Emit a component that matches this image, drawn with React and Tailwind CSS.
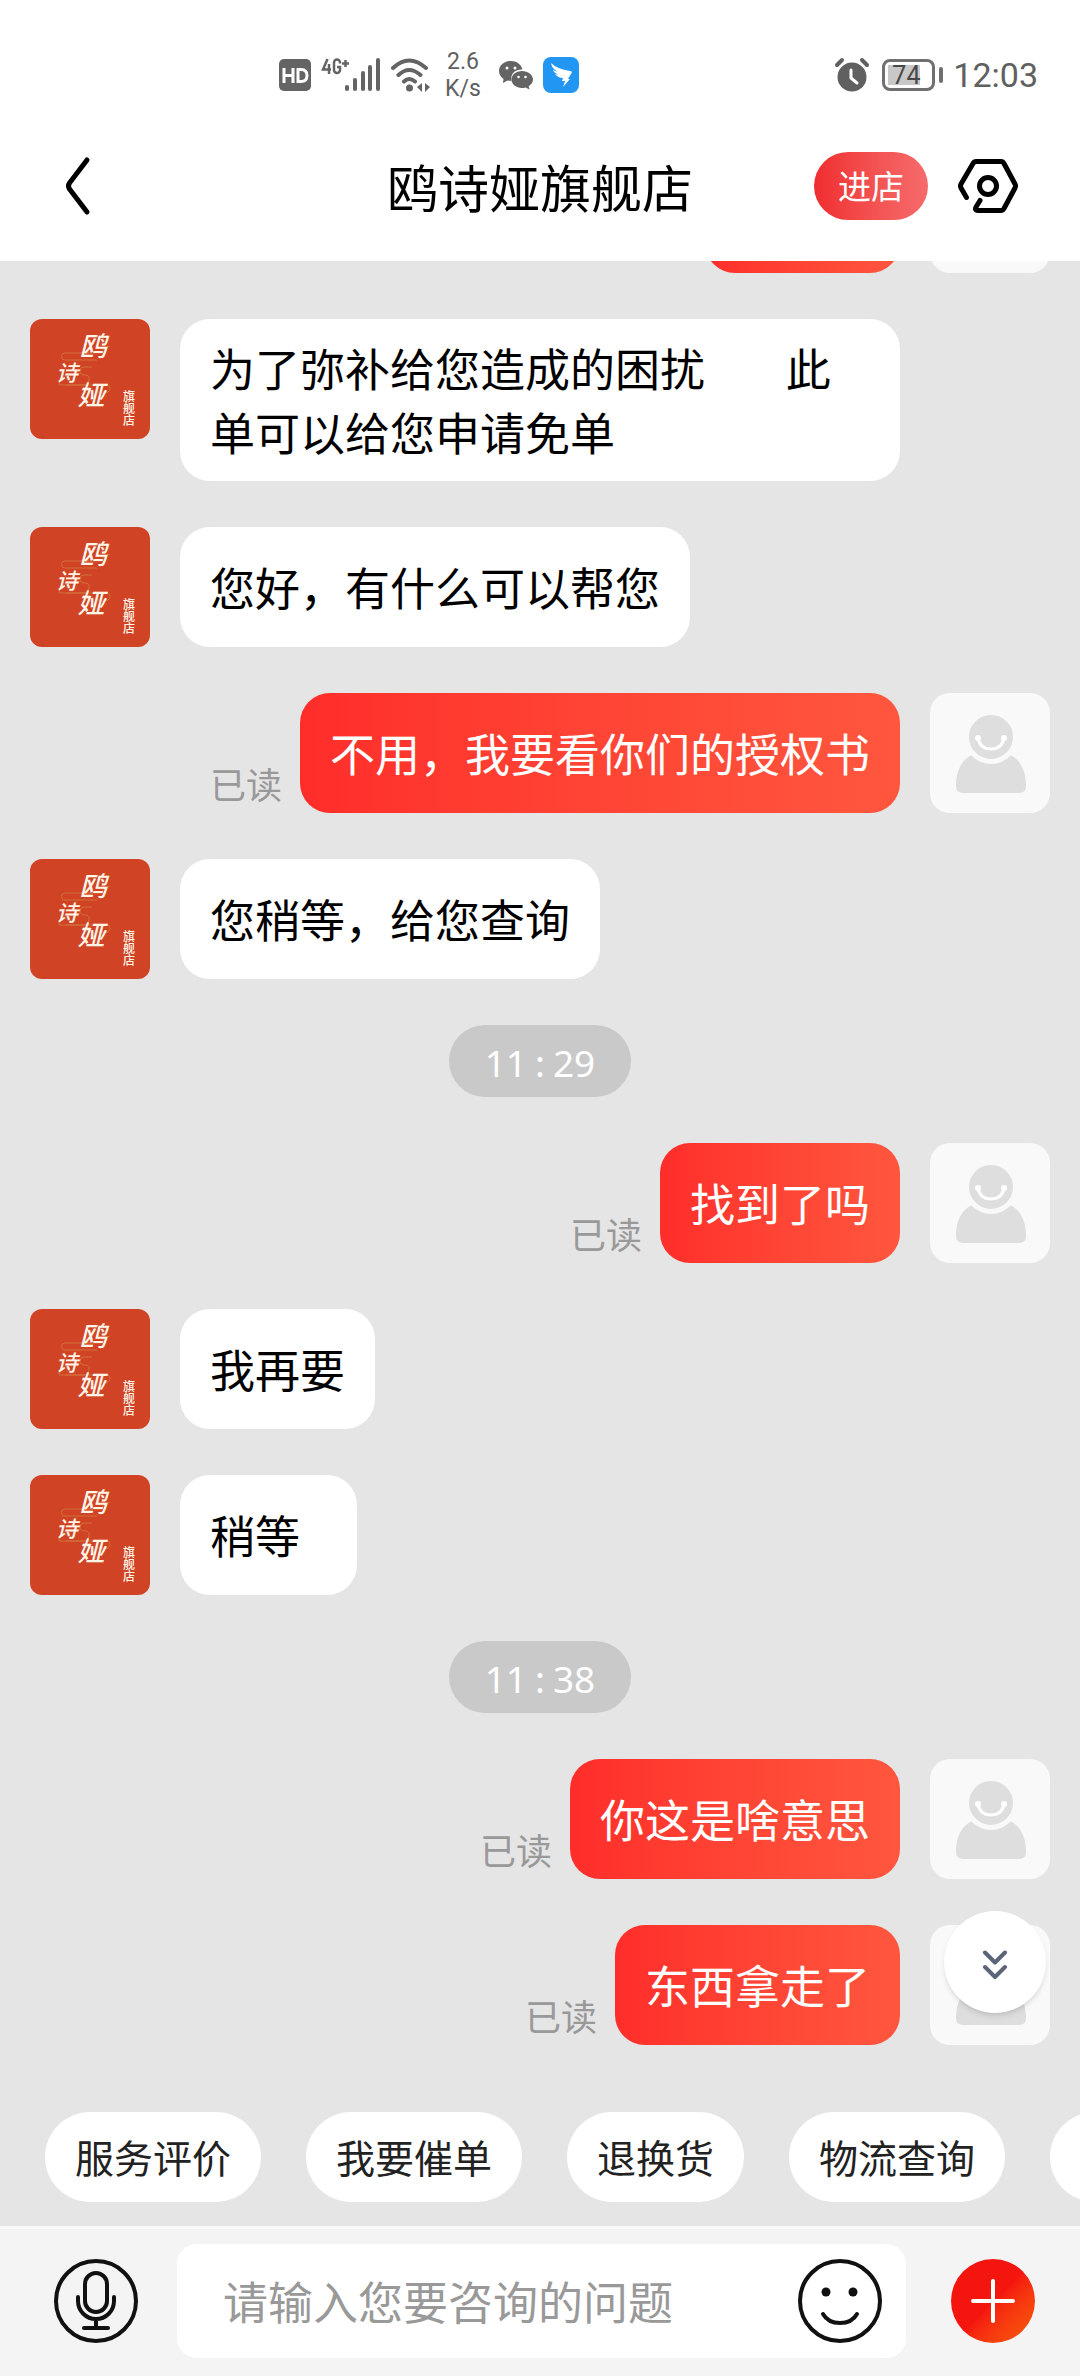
import { useState } from 'react'

const messages = [
  { from: 'shop', text: '为了弥补给您造成的困扰        此单可以给您申请免单' },
  { from: 'shop', text: '您好，有什么可以帮您' },
  { from: 'me', text: '不用，我要看你们的授权书' },
  { from: 'shop', text: '您稍等，给您查询' },
  { time: ['11', '29'] },
  { from: 'me', text: '找到了吗' },
  { from: 'shop', text: '我再要' },
  { from: 'shop', text: '稍等' },
  { time: ['11', '38'] },
  { from: 'me', text: '你这是啥意思' },
  { from: 'me', text: '东西拿走了' },
]

const shortcuts = ['服务评价', '我要催单', '退换货', '物流查询']

function StatusBar() {
  return (
    <div className="flex h-[114px] items-center pl-[279px] pr-[42px] pt-9 font-['Roboto',sans-serif] text-[#606060]">
      <svg width="32" height="32" viewBox="0 0 32 32">
        <rect width="32" height="32" rx="5" fill="#646464" />
        <path d="M5 9v15M14 9v15M5 16.500h9M19 9v15M19 10.500h3q6 0 6 6t-6 6h-3" fill="none" stroke="#fff" strokeWidth="3" />
      </svg>
      <svg className="ml-2.5" width="60" height="36" viewBox="0 0 60 36" fill="#646464">
        <path d="M6.500 2L2 12.500h8M8 7v10M19 6.500V5.500a3 3 0 0 0-6 0v7.500a3 3 0 0 0 6 0v-3h-3M24.500 3v7M21 6.500h7" fill="none" stroke="#646464" strokeWidth="2.500" />
        <rect x="24" y="28" width="4" height="6" rx="2" />
        <rect x="32" y="21" width="4" height="13" rx="2" />
        <rect x="40" y="14" width="4" height="20" rx="2" />
        <rect x="47" y="8" width="4" height="26" rx="2" />
        <rect x="55" y="1" width="4" height="33" rx="2" />
      </svg>
      <svg className="ml-2" width="42" height="36" viewBox="0 0 42 36" fill="none" stroke="#646464" strokeWidth="4" strokeLinecap="round">
        <path d="M4 11Q20 -4 37 11M9.500 18Q20 8 31.500 18M15 24.500Q20 19.500 26 24.500" />
        <circle cx="20.500" cy="31" r="3.500" fill="#646464" stroke="none" />
        <path d="M33 26v9l-5-5zM36 26v9l5-5z" fill="#646464" stroke="none" />
      </svg>
      <div className="ml-3 w-10 text-center text-[23px] leading-[27px]">
        <p>2.6</p>
        <p>K/s</p>
      </div>
      <svg className="ml-4" width="34" height="30" viewBox="0 0 34 30" fill="#646464">
        <path d="M12 1C5 1 0 5.500 0 11c0 3.500 2 6 4.500 8L4 23l4.500-2.500q2 .5 4 .5C11 14 16 9 23.500 9.500 22 4 17.500 1 12 1z" />
        <path d="M23 11c-6 0-10.500 3.700-10.500 8.500S17 28 23 28q2 0 3.500-.5L30.500 29.500l-.8-3.200C32.500 24.500 34 22 34 19.500 34 14.700 29 11 23 11z" />
        <g fill="#fff">
          <circle cx="8" cy="8" r="1.500" />
          <circle cx="16" cy="8" r="1.500" />
          <circle cx="19.500" cy="17" r="1.300" />
          <circle cx="26.500" cy="17" r="1.300" />
        </g>
      </svg>
      <svg className="ml-2.5" width="36" height="36" viewBox="0 0 36 36">
        <rect width="36" height="36" rx="8" fill="#2196f3" />
        <path d="M8 6q6 6 19 8 3 0 1 3l-3 5h2l-7 8 2-6h-3l1-3q-5 0-8-4l4 1q-5-2-6-5l5 2q-6-3-7-9z" fill="#fff" />
      </svg>
      <svg className="ml-auto" width="36" height="36" viewBox="0 0 36 36" fill="none" strokeLinecap="round">
        <path d="M3 8l5-5M33 8l-5-5" stroke="#606060" strokeWidth="4" />
        <circle cx="18" cy="20" r="14.500" fill="#606060" />
        <path d="M17 13v8l6 5" stroke="#fff" strokeWidth="3" strokeLinejoin="round" />
      </svg>
      <div className="ml-3 flex items-center gap-1">
        <div className="flex h-8 w-[53px] items-center rounded-lg border-3 border-[#707070] p-[3px]">
          <span className="flex h-full w-8 items-center bg-[#c8c8c8] pl-1 text-[25px] leading-none text-[#484848]">74</span>
        </div>
        <span className="h-4 w-1 rounded-full bg-[#707070]" />
      </div>
      <span className="ml-2.5 text-[34px] leading-9">12:03</span>
    </div>
  )
}

function Header() {
  return (
    <header className="bg-white">
      <StatusBar />
      <div className="grid h-[147px] grid-cols-[1fr_auto_1fr] items-center px-[62px] pb-1">
        <button aria-label="返回" className="justify-self-start">
          <svg width="36" height="60" viewBox="0 0 36 60" fill="none" stroke="#000" strokeWidth="5" strokeLinecap="round" strokeLinejoin="round">
            <path d="M25 4L7.500 27q-2 3 0 6L25 56" />
          </svg>
        </button>
        <h1 className="text-[51px] leading-[72px]">鸥诗娅旗舰店</h1>
        <div className="flex items-center gap-[30px] justify-self-end">
          <button className="h-[68px] w-[114px] rounded-full bg-linear-to-r from-[#f02c2f] to-[#f66a6c] text-[33px] leading-none text-white">进店</button>
          <button aria-label="设置">
            <svg width="60" height="54" viewBox="0 0 60 54" fill="none" stroke="#000" strokeWidth="5" strokeLinecap="round" strokeLinejoin="round">
              <path d="M8.500 38.500L3 29q-1-2 0-4L15 4.500Q16.200 2.500 18 2.500h25q2 0 3 2L57 25q1 2 0 4L46 49.500q-1 2-3 2H19.500q-3 0-1.500-3.500l4-6.500" />
              <circle cx="30" cy="27" r="8.500" />
            </svg>
          </button>
        </div>
      </div>
    </header>
  )
}

function ShopAvatar() {
  return (
    <svg className="size-[120px] shrink-0 rounded-xl bg-[#d04325]" viewBox="0 0 120 120">
      <path d="M35 34h40M35 41h32M35 34a3.500 3.500 0 0 0 0 7M62 48H54q-4 0-4 4t5 4 4 5-4 5H29v-5M36 66h42a4 4 0 0 1 0 7H66M72 31q6-4 8-4" fill="none" stroke="#d2703a" strokeWidth="1" />
      <g fill="#fff4e6" fontStyle="italic" fontWeight="500" textAnchor="middle">
        <text x="63" y="37" fontSize="27">鸥</text>
        <text x="37" y="62" fontSize="22">诗</text>
        <text x="61" y="86" fontSize="27">娅</text>
      </g>
      <text x="99" y="71" fontSize="12" fontWeight="500" fill="#fff4e6" className="[writing-mode:vertical-rl]">旗舰店</text>
    </svg>
  )
}

function UserAvatar() {
  return (
    <svg className="size-[120px] shrink-0 rounded-[20px] bg-[#f9f9f9]" viewBox="0 0 120 120">
      <path d="M26 93C26 76 33 66 42 62q18 14 38 0c9 4 16 14 16 31q0 7-7 7H33q-7 0-7-7z" fill="#dedede" />
      <circle cx="61" cy="44" r="24.500" fill="#dedede" stroke="#f9f9f9" strokeWidth="5" />
      <path d="M48 45q2 11 13 11t13-11" fill="none" stroke="#fff" strokeWidth="3" strokeLinecap="round" />
      <circle cx="48" cy="45" r="3" fill="#fff" />
      <circle cx="74" cy="45" r="3" fill="#fff" />
    </svg>
  )
}

function Message({ message }) {
  if (message.time) {
    return (
      <time className="flex h-[72px] w-[182px] items-center justify-center self-center rounded-full bg-[#c9c9c9] pt-0.5 font-['Noto_Sans',sans-serif] text-[37px] leading-none text-white">
        {message.time[0]}
        <span className="px-2">:</span>
        {message.time[1]}
      </time>
    )
  }

  if (message.from === 'me') {
    return (
      <div className="flex items-start justify-end gap-[30px]">
        <div className="flex items-end gap-[18px]">
          <span className="text-4xl leading-[60px] text-[#999]">已读</span>
          <p className="flex min-h-[120px] max-w-[720px] items-center rounded-[30px] bg-linear-to-r from-[#ff2d2a] to-[#ff563e] px-[30px] py-[17px] text-[45px] leading-[64px] text-white">
            {message.text}
          </p>
        </div>
        <UserAvatar />
      </div>
    )
  }

  return (
    <div className="flex items-start gap-[30px]">
      <ShopAvatar />
      <p className="flex min-h-[120px] min-w-[177px] max-w-[720px] items-center whitespace-pre-wrap rounded-[30px] bg-white px-[30px] py-[17px] text-[45px] leading-[64px]">
        {message.text}
      </p>
    </div>
  )
}

export default function App() {
  const [draft, setDraft] = useState('')

  return (
    <div className="flex min-h-screen flex-col overflow-x-hidden bg-[#e5e5e5] font-['Noto_Sans_CJK_SC',sans-serif] text-black">
      <Header />

      <main className="relative flex flex-1 flex-col gap-[46px] px-[30px]">
        {/* end of the message scrolled under the header */}
        <div className="flex h-3 items-end justify-end gap-[30px] overflow-hidden">
          <div className="h-[120px] w-[195px] shrink-0 rounded-[30px] bg-linear-to-r from-[#ff2d2a] to-[#ff563e]" />
          <div className="size-[120px] shrink-0 rounded-[20px] bg-[#f9f9f9]" />
        </div>
        {messages.map((message, i) => <Message key={i} message={message} />)}

        <button aria-label="回到底部" className="absolute bottom-8 right-[34px] flex size-[102px] items-center justify-center rounded-full bg-white pt-1.5 shadow-md">
          <svg width="26" height="30" viewBox="0 0 26 30" fill="none" stroke="#5c6478" strokeWidth="4" strokeLinecap="round" strokeLinejoin="round">
            <path d="M3 2.500l10 10 10-10M3 17l10 10 10-10" />
          </svg>
        </button>
      </main>

      <nav className="mt-[67px] flex gap-[45px] overflow-hidden px-[45px] pb-6">
        {shortcuts.map((label) => (
          <button key={label} className="h-[90px] shrink-0 rounded-full bg-white px-[30px] pb-0.5 text-[39px] leading-none text-[#222]">
            {label}
          </button>
        ))}
        <button aria-label="更多" className="h-[90px] w-[216px] shrink-0 rounded-full bg-white" />
      </nav>

      <footer className="flex h-[150px] items-center border-t-3 border-[#f8f8f8] bg-[#f4f4f4] pb-[3px] pl-[54px] pr-[45px]">
        <button aria-label="语音" className="shrink-0">
          <svg width="84" height="84" viewBox="0 0 84 84" fill="none" stroke="#111" strokeWidth="4" strokeLinecap="round">
            <circle cx="42" cy="42" r="40" />
            <rect x="31" y="14" width="22" height="39" rx="11" />
            <path d="M24 38v4a18 18 0 0 0 36 0v-4M42 60v9M30 69h24" />
          </svg>
        </button>
        <div className="ml-[39px] flex h-[114px] min-w-0 flex-1 items-center rounded-[20px] bg-white pl-[46px] pr-6">
          <input
            aria-label="消息"
            className="min-w-0 flex-1 bg-transparent text-[45px] leading-[64px] outline-none placeholder:text-[#999]"
            placeholder="请输入您要咨询的问题"
            value={draft}
            onChange={(e) => setDraft(e.target.value)}
          />
          <button aria-label="表情" className="shrink-0">
            <svg width="84" height="84" viewBox="0 0 84 84" fill="none" stroke="#111" strokeWidth="4" strokeLinecap="round">
              <circle cx="42" cy="42" r="40" />
              <path d="M25 55q5 9 17 9t17-9" />
              <circle cx="28" cy="33" r="4.500" fill="#111" stroke="none" />
              <circle cx="55" cy="33" r="4.500" fill="#111" stroke="none" />
            </svg>
          </button>
        </div>
        <button aria-label="添加" className="ml-[45px] flex size-[84px] shrink-0 items-center justify-center rounded-full bg-linear-to-br from-[#f5150f] from-50% to-[#f85a0c]">
          <svg width="46" height="46" viewBox="0 0 46 46" stroke="#fff" strokeWidth="4" strokeLinecap="round">
            <path d="M23 3v40M3 23h40" />
          </svg>
        </button>
      </footer>
    </div>
  )
}
